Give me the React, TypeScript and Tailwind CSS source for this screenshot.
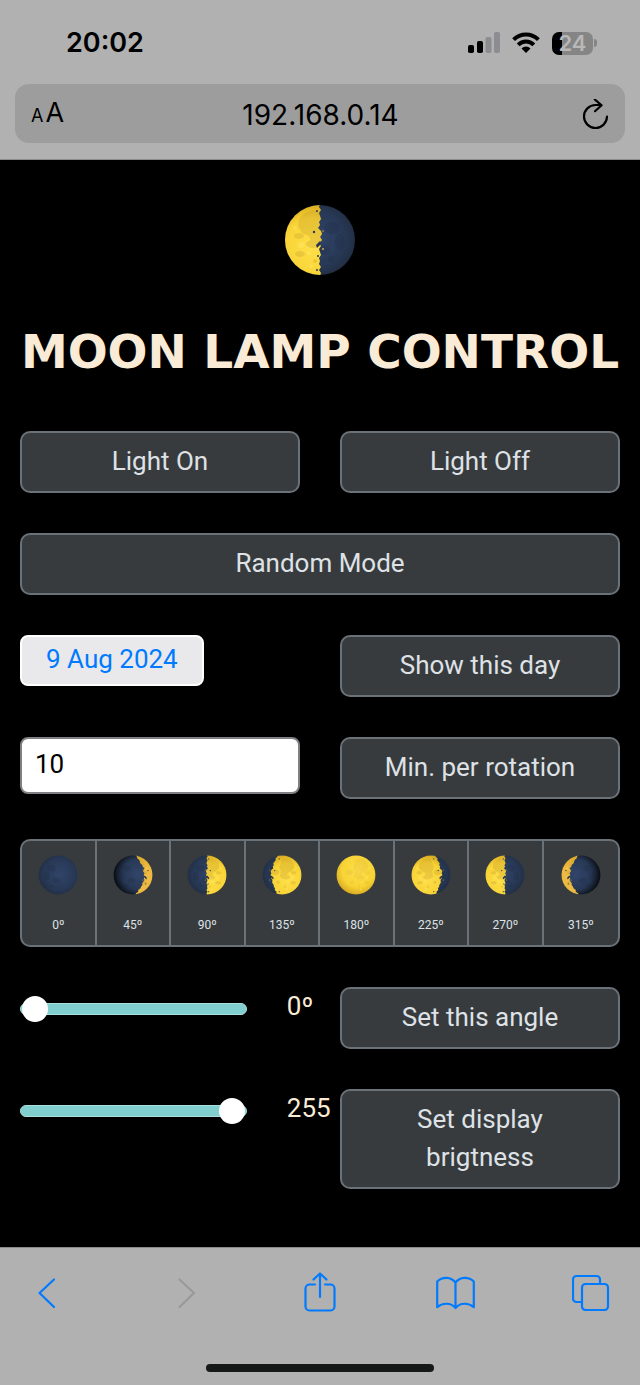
import clsx from 'clsx';
import React, { useState } from 'react';

interface MoonProps {
  id: string;
  angle: number;
  className?: string;
}

// where the terminator crosses the pole and the equator, for phases lit from the right
const TERMINATORS: Record<number, [number, number]> = {
  0: [80, 80],
  45: [40, 57],
  90: [36, 36],
  135: [28, 17],
  180: [-10, -10],
};

const JITTER = [0, 1, -1, 1, 0, -1, 1, 0, 2, -1, -2, 0, -2, 1, -1, 1, 0, -1, 1, 0, 1, -1, 1, -1, 0];

const terminatorPath = (pole: number, equator: number) => {
  const edge = JITTER.map((j, i) => {
    const y = i * 3;
    const x = pole + (equator - pole) * Math.sin((Math.PI * y) / 72) + j;
    return `L${x.toFixed(1)} ${y}`;
  });
  return `M80 -4L${pole} -4${edge.join('')}L${pole} 76L80 76Z`;
};

function Moon({ id, angle, className }: MoonProps) {
  const mirrored = angle > 180;
  const [pole, equator] = TERMINATORS[mirrored ? 360 - angle : angle];
  const crescent = angle === 45 || angle === 315;
  const full = angle === 180;
  const partial = angle !== 0 && !full;

  return (
    <svg viewBox="0 0 72 72" className={className} aria-hidden="true">
      <defs>
        <clipPath id={`${id}-disc`}>
          <circle cx="36" cy="36" r="35" />
        </clipPath>
        <clipPath id={`${id}-lit`}>
          <path d={terminatorPath(pole, equator)} />
        </clipPath>
        <radialGradient id={`${id}-dark`} cx={crescent ? '0.62' : '0.54'} cy="0.48" r="0.58">
          <stop offset="0" stopColor="#32456a" />
          <stop offset="0.65" stopColor="#283956" />
          <stop offset="1" stopColor={crescent ? '#0c1118' : '#202b3e'} />
        </radialGradient>
        <radialGradient id={`${id}-glow`} cx={full ? '0.55' : '0.62'} cy={full ? '0.4' : '0.6'} r="0.62">
          <stop offset="0" stopColor={crescent ? '#efbd4b' : '#fee04b'} />
          <stop offset="0.65" stopColor={crescent ? '#edb93f' : '#f8d336'} />
          <stop offset="1" stopColor="#d5a51d" />
        </radialGradient>
      </defs>
      <g transform={mirrored ? 'matrix(-1 0 0 1 72 0)' : undefined} clipPath={`url(#${id}-disc)`}>
        <rect width="72" height="72" fill={`url(#${id}-dark)`} />
        <g fill="#17233a" opacity="0.18">
          <ellipse cx="24" cy="24" rx="8" ry="6" />
          <ellipse cx="16" cy="38" rx="5" ry="8" />
          <ellipse cx="33" cy="46" rx="7" ry="5" />
          <circle cx="25" cy="55" r="3" />
        </g>
        <g clipPath={`url(#${id}-lit)`}>
          <rect width="72" height="72" fill={`url(#${id}-glow)`} />
          <g fill="#b98e2c" opacity={full ? '0.12' : '0.25'}>
            <path d="M36 8l7-2 8 3 6 6 1 7-4 7-7 3-2 6-8 4-5-3 2-9-3-8z" />
            <path d="M36 14l9-2 6 6-2 8-7 3-6 1z" />
            <ellipse cx="57" cy="32" rx="5" ry="3" />
            <ellipse cx="43" cy="40" rx="7" ry="4" />
            <ellipse cx="56" cy="50" rx="5" ry="3" />
            <ellipse cx="24" cy="31" rx="7" ry="5" />
            <circle cx="41" cy="57" r="2" />
            <circle cx="29" cy="49" r="3" />
          </g>
          <g fill="#ffec70" opacity="0.35">
            <circle cx="55" cy="41" r="3" />
            <circle cx="45" cy="62" r="2" />
            <circle cx="61" cy="24" r="2" />
            <circle cx="47" cy="49" r="2" />
          </g>
        </g>
        {partial && (
          <>
            <g fill="#2a3650">
              <circle cx={equator + 6} cy="28" r="1.2" />
              <circle cx={pole + 3} cy="7" r="1" />
              <circle cx={equator + 2} cy="52" r="1" />
              <circle cx={pole + 3} cy="66" r="1" />
              <path d={`M${equator} 37l4 4-1 3-4-4z`} />
            </g>
            <g fill="#d6a83c">
              <circle cx={equator - 3} cy="27" r="0.8" />
              <circle cx={equator - 3} cy="45" r="1" />
            </g>
          </>
        )}
      </g>
    </svg>
  );
}

interface LampButtonProps {
  children: React.ReactNode;
  className?: string;
}

function LampButton({ children, className }: LampButtonProps) {
  return (
    <button
      type="button"
      className={clsx(
        'rounded-[10px] border-2 border-[#697179] bg-[#373b3e] px-8 pt-[9px] pb-[11px] text-center leading-[38px] text-[#dee2e6]',
        className
      )}
    >
      {children}
    </button>
  );
}

interface SliderProps {
  label: string;
  max: number;
  initial: number;
  unit?: string;
}

function Slider({ label, max, initial, unit = '' }: SliderProps) {
  const [value, setValue] = useState(initial);

  return (
    <div className="flex items-start gap-10">
      <input
        type="range"
        aria-label={label}
        min={0}
        max={max}
        value={value}
        onChange={(e) => setValue(Number(e.target.value))}
        className="mt-[9px] h-[26px] w-[81%] shrink-0 appearance-none bg-transparent [&::-webkit-slider-runnable-track]:h-3 [&::-webkit-slider-runnable-track]:rounded-full [&::-webkit-slider-runnable-track]:border [&::-webkit-slider-runnable-track]:border-[#a9dfdf] [&::-webkit-slider-runnable-track]:bg-[#82cfd0] [&::-webkit-slider-runnable-track]:px-px [&::-webkit-slider-thumb]:-mt-2 [&::-webkit-slider-thumb]:size-[26px] [&::-webkit-slider-thumb]:appearance-none [&::-webkit-slider-thumb]:rounded-full [&::-webkit-slider-thumb]:bg-white"
      />
      <output className="leading-[38px] text-[#faebd7]">{value}{unit}</output>
    </div>
  );
}

function StatusBar() {
  return (
    <div className="flex h-[84px] items-center justify-between pt-0.5 pr-[43px] pl-[66px]">
      <span className="text-[27px] leading-8 font-semibold">20:02</span>
      <div className="flex items-center gap-3">
        <svg width="33" height="22" viewBox="0 0 33 22" aria-label="Signal">
          <rect x="1" y="13" width="6" height="8" rx="1.8" />
          <rect x="10" y="9" width="6" height="12" rx="1.8" />
          <rect x="18.5" y="5" width="6" height="16" rx="1.8" fill="#8c8d90" />
          <rect x="27" y="0" width="6" height="21" rx="1.8" fill="#8c8d90" />
        </svg>
        <svg width="28" height="22" viewBox="0 0 28 22" aria-label="Wi-Fi">
          <g fill="none" stroke="#000" strokeWidth="4">
            <path d="M1.6 7.6A17.5 17.5 0 0 1 26.4 7.6" />
            <path d="M6.2 12.8A11 11 0 0 1 21.8 12.8" />
          </g>
          <path d="M14 21l-4.5-4.6a6.4 6.4 0 0 1 9 0z" />
        </svg>
        <div className="flex items-center gap-px">
          <div className="flex h-[23px] w-[41px] items-center justify-center rounded-[7px] bg-[linear-gradient(to_right,#000_10px,#858585_10px)] text-[22px] leading-[22px] font-semibold text-[#b8b8b8]">
            24
          </div>
          <span className="h-2 w-[3px] rounded-r-full bg-[#858585]" />
        </div>
      </div>
    </div>
  );
}

function AddressBar() {
  return (
    <div className="mx-[15px] mb-4 flex h-[59px] items-center justify-between rounded-[14px] bg-[#9d9d9d] pt-0.5 pr-[15px] pl-4">
      <button type="button" aria-label="Page settings" className="flex w-9 items-baseline gap-0.5">
        <span className="text-lg leading-8">A</span>
        <span className="text-[27px] leading-8">A</span>
      </button>
      <span className="text-[28px] leading-8">192.168.0.14</span>
      <button type="button" aria-label="Reload" className="flex w-9 justify-end">
        <svg width="28" height="32" viewBox="0 0 28 32" fill="none" stroke="#000" strokeWidth="2.2" strokeLinecap="round" strokeLinejoin="round">
          <path d="M25 17.5A11.5 11.5 0 1 1 13.5 6H19" />
          <path d="M12.800 0.500l6.800 5.800L13 12.200" />
        </svg>
      </button>
    </div>
  );
}

const TOOLBAR = [
  { label: 'Back', d: 'M26 7.5L11.5 21L26 35' },
  { label: 'Forward', d: 'M15.5 7.5L30 21L15.5 35', disabled: true },
  {
    label: 'Share',
    d: 'M15 12.500H9.500a4 4 0 0 0-4 4V34.500a4 4 0 0 0 4 4h21a4 4 0 0 0 4-4V16.500a4 4 0 0 0-4-4h-5.500M20 25V1.500M13.500 7.500L20 1.500L26.500 7.500',
  },
  {
    label: 'Bookmarks',
    d: 'M19.500 10.500C15 4.500 6.500 4.500 1.200 9.500V35.200C6.500 30.500 15 30.500 19.500 36C24 30.500 32.500 30.500 37.800 35.200V9.500C32.500 4.500 24 4.500 19.500 10.500V36',
  },
  {
    label: 'Tabs',
    d: 'M10 30H4.500a3.500 3.500 0 0 1-3.500-3.500V7.500A3.500 3.500 0 0 1 4.500 4H24.500A3.500 3.500 0 0 1 28 7.500V12M13.500 12H32.500A3.500 3.500 0 0 1 36 15.500V34.500A3.500 3.500 0 0 1 32.500 38H13.500A3.500 3.500 0 0 1 10 34.500V15.500A3.500 3.500 0 0 1 13.500 12Z',
  },
];

function Toolbar() {
  return (
    <footer className="border-t border-[#8b8b8b] bg-[#b1b1b1] pt-6 pb-[13px]">
      <nav className="flex justify-between px-7">
        {TOOLBAR.map(({ label, d, disabled }) => (
          <button
            key={label}
            type="button"
            aria-label={label}
            disabled={disabled}
            className={disabled ? 'text-[#999999]' : 'text-[#007aff]'}
          >
            <svg width="40" height="40" viewBox="0 0 40 40" fill="none" stroke="currentColor" strokeWidth="2.2" strokeLinecap="round" strokeLinejoin="round">
              <path d={d} />
            </svg>
          </button>
        ))}
      </nav>
      <div className="mx-auto mt-[52px] h-2 w-[228px] rounded-full bg-[#161817]" />
    </footer>
  );
}

const ANGLES = [0, 45, 90, 135, 180, 225, 270, 315];

export default function App() {
  const [minutes, setMinutes] = useState('10');

  return (
    <div className="min-h-screen bg-black font-['Inter',sans-serif] text-black">
      <header className="border-b border-[#8b8b8b] bg-[#b1b1b1]">
        <StatusBar />
        <AddressBar />
      </header>

      <main className="flex flex-col px-5 pt-11 pb-[58px] font-['Roboto',sans-serif] text-[26px]">
        <Moon id="logo" angle={270} className="size-[72px] self-center" />
        <h1 className="mt-12 mb-[51px] text-center font-['DejaVu_Sans',sans-serif] text-[47px] leading-[56px] font-bold whitespace-nowrap text-[#faebd7]">
          MOON LAMP CONTROL
        </h1>

        <div className="grid grid-cols-2 items-start gap-10">
          <LampButton>Light On</LampButton>
          <LampButton>Light Off</LampButton>

          <LampButton className="col-span-2">Random Mode</LampButton>

          <button
            type="button"
            aria-haspopup="dialog"
            className="justify-self-start rounded-lg border-2 border-white bg-[#e9e9eb] px-6 pt-[3px] pb-[5px] leading-[39px] text-[#007aff]"
          >
            9 Aug 2024
          </button>
          <LampButton>Show this day</LampButton>

          <input
            type="number"
            aria-label="Minutes per rotation"
            value={minutes}
            onChange={(e) => setMinutes(e.target.value)}
            className="h-[57px] w-full appearance-none rounded-lg border-2 border-[#808084] bg-white px-[13px] pb-1 text-black [&::-webkit-inner-spin-button]:appearance-none"
          />
          <LampButton>Min. per rotation</LampButton>

          <div className="col-span-2 grid grid-cols-8 divide-x-2 divide-[#697179] overflow-hidden rounded-[10px] border-2 border-[#697179] bg-[#373b3e]">
            {ANGLES.map((angle) => (
              <button key={angle} type="button" className="flex flex-col items-center gap-[26px] pt-[14px] pb-4 text-xs text-[#dee2e6]">
                <Moon id={`moon-${angle}`} angle={angle} className="size-10" />
                <span className="leading-[8px]">{angle}º</span>
              </button>
            ))}
          </div>

          <Slider label="Angle" max={360} initial={0} unit="º" />
          <LampButton>Set this angle</LampButton>

          <Slider label="Brightness" max={255} initial={255} />
          <LampButton>Set display brigtness</LampButton>
        </div>
      </main>

      <Toolbar />
    </div>
  );
}
